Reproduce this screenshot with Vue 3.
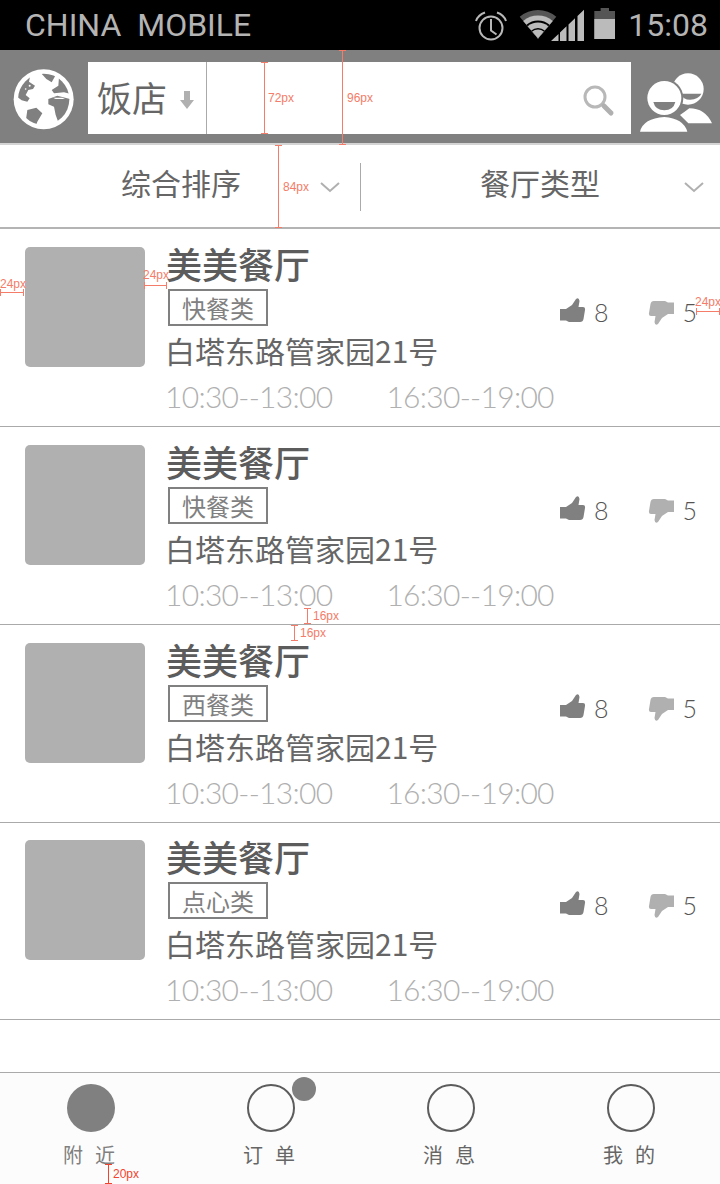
<script setup>
const shops = [
  { tag: '快餐类' },
  { tag: '快餐类' },
  { tag: '西餐类' },
  { tag: '点心类' },
]

const tabs = [
  { name: '附', name2: '近', active: true },
  { name: '订', name2: '单', dot: true },
  { name: '消', name2: '息' },
  { name: '我', name2: '的' },
]

// redline measurements drawn over the mockup
const vMarks = [
  { x: 264, y: 62, h: 72, label: '72px', top: 91, left: 268 },
  { x: 342, y: 50, h: 95, label: '96px', top: 91, left: 347 },
  { x: 278, y: 145, h: 83, label: '84px', top: 180, left: 283 },
  { x: 307, y: 608, h: 16, label: '16px', top: 609, left: 313 },
  { x: 294, y: 625, h: 16, label: '16px', top: 626, left: 300 },
  { x: 108, y: 1164, h: 20, label: '20px', top: 1167, left: 113, strong: true },
]
const hMarks = [
  { x: 0, y: 292, w: 24, label: '24px', top: 277, left: 0 },
  { x: 144, y: 285, w: 23, label: '24px', top: 268, left: 143 },
  { x: 696, y: 311, w: 24, label: '24px', top: 295, left: 695 },
]
</script>

<template>
  <div class="phone">
    <div class="status">
      <span class="carrier">CHINA&nbsp; MOBILE</span>
      <div class="status-right">
        <svg class="alarm" width="32" height="32" viewBox="0 0 32 32" fill="none" stroke="#b8b8b8">
          <circle cx="16" cy="19" r="11.500" stroke-width="2" />
          <path d="M16 10v11.500l5.500 4" stroke-width="2" />
          <path d="M1 12Q3 6 10 3.500M31 12Q29 6 22 3.500" stroke-width="2" />
        </svg>
        <svg class="net" width="66" height="34" viewBox="0 0 66 34">
          <path d="M19 30.500L0.700 8.700A28.500 28.500 0 0 1 37.300 8.700Z" fill="#555" />
          <path d="M19 30.500L4.200 12.900A23 23 0 0 1 33.800 12.900Z" fill="#bbb" />
          <path d="M19 30.500L7.400 16.700A18 18 0 0 1 30.600 16.700Z" fill="#000" />
          <path d="M19 30.500L8.700 18.200A16 16 0 0 1 29.300 18.200Z" fill="#bbb" />
          <path d="M19 30.500L12.200 22.500A10.500 10.500 0 0 1 25.800 22.500Z" fill="#000" />
          <path d="M19 30.500L13.200 23.600A9 9 0 0 1 24.800 23.600Z" fill="#bbb" />
          <path d="M32 33L39.500 26V33ZM41 33V24.500L47.500 18.300V33ZM49.500 33V16.400L56 10.200V33ZM58.500 33V7.900L65 1.700V33Z" fill="#bbb" />
        </svg>
        <div class="battery"><div class="battery-fill"></div></div>
        <span class="clock">15:08</span>
      </div>
    </div>

    <div class="header">
      <svg class="globe" width="68" height="68" viewBox="0 0 204 204">
        <defs>
          <clipPath id="globe-inner"><circle cx="104" cy="103" r="77" /></clipPath>
        </defs>
        <circle cx="104" cy="103" r="90" fill="#fff" />
        <g clip-path="url(#globe-inner)" fill="#808080">
          <path d="M20 92L30 40L64 30L60 50L78 62L72 72L58 75L50 90L62 100L55 110L38 106Z" />
          <path d="M92 20H146L128 52L112 42Z" />
          <path d="M150 36L190 60V88L165 82L135 85L128 75L148 62Z" />
          <path d="M118 102L145 92L190 104V160L150 177L140 150L135 125L118 118Z" />
          <path d="M55 135L82 128L100 145L85 170L78 190L50 170Z" />
        </g>
        <circle cx="62" cy="62" r="3" fill="#fff" />
        <circle cx="50" cy="72" r="2.500" fill="#fff" />
        <path d="M132 98H160L168 102L140 102Z" fill="#fff" />
      </svg>
      <div class="search">
        <div class="city">
          <span>饭店</span>
          <svg width="14" height="18" viewBox="0 0 14 18"><path d="M4 0H10V9H14L7 18L0 9H4Z" fill="#b0b0b0" /></svg>
        </div>
        <svg class="lens" width="32" height="32" viewBox="0 0 32 32" fill="none">
          <circle cx="12" cy="12" r="10" stroke="#b8b8b8" stroke-width="3" />
          <path d="M21 21L28 28" stroke="#b0b0b0" stroke-width="5" stroke-linecap="round" />
        </svg>
      </div>
      <svg class="people" width="90" height="90" viewBox="0 0 270 270">
        <circle cx="174" cy="102" r="47" fill="#fff" />
        <path d="M150 116H214Q206 133 180 134Q160 134 150 116Z" fill="#808080" />
        <path d="M150 180Q165 170 178 160Q225 160 246 205H175Z" fill="#fff" />
        <circle cx="103" cy="129" r="57" fill="#808080" />
        <circle cx="103" cy="129" r="51" fill="#fff" />
        <path d="M70 141H136Q130 166 103 166Q76 166 70 141Z" fill="#808080" />
        <path d="M30 230Q40 190 103 186Q160 190 172 230Z" fill="#fff" />
      </svg>
    </div>

    <div class="filters">
      <div class="filter">
        <span class="filter-text">综合排序</span>
        <svg class="chevron" width="20" height="11" viewBox="0 0 20 11"><path d="M1 1L10 9L19 1" fill="none" stroke="#b0b0b0" stroke-width="2" /></svg>
      </div>
      <div class="filter filter-second">
        <span class="filter-text">餐厅类型</span>
        <svg class="chevron" width="20" height="11" viewBox="0 0 20 11"><path d="M1 1L10 9L19 1" fill="none" stroke="#b0b0b0" stroke-width="2" /></svg>
      </div>
    </div>

    <div class="list">
      <div v-for="(shop, i) in shops" :key="i" class="shop">
        <div class="thumb"></div>
        <div class="info">
          <div class="title">美美餐厅</div>
          <div class="tag">{{ shop.tag }}</div>
          <div class="address">白塔东路管家园21号</div>
          <div class="hours"><span>10:30--13:00</span><span>16:30--19:00</span></div>
        </div>
        <div class="votes">
          <div class="vote">
            <svg width="26" height="24" viewBox="0 0 26 24" fill="#808080"><path d="M0 11H6L12 7L16 1Q19 -1 19.500 3L18.500 9H23Q25.500 9 25 12L23.500 21Q23 24 20 24H9L6 22.500H0Z" /></svg>
            <span>8</span>
          </div>
          <div class="vote">
            <svg class="down" width="26" height="24" viewBox="0 0 26 24" fill="#b0b0b0"><path d="M0 11H6L12 7L16 1Q19 -1 19.500 3L18.500 9H23Q25.500 9 25 12L23.500 21Q23 24 20 24H9L6 22.500H0Z" /></svg>
            <span>5</span>
          </div>
        </div>
      </div>
    </div>

    <div class="tabbar">
      <div v-for="tab in tabs" :key="tab.name" class="tab">
        <div :class="['circle', { active: tab.active }]">
          <div v-if="tab.dot" class="dot"></div>
        </div>
        <div :class="['tab-name', { active: tab.active }]"><span>{{ tab.name }}</span><span>{{ tab.name2 }}</span></div>
      </div>
    </div>

    <template v-for="m in vMarks" :key="m.x">
      <div :class="['vmark', { strong: m.strong }]" :style="{ left: m.x + 'px', top: m.y + 'px', height: m.h + 'px' }"></div>
      <span :class="['mark-label', { strong: m.strong }]" :style="{ left: m.left + 'px', top: m.top + 'px' }">{{ m.label }}</span>
    </template>
    <template v-for="m in hMarks" :key="m.x">
      <div class="hmark" :style="{ left: m.x + 'px', top: m.y + 'px', width: m.w + 'px' }"></div>
      <span class="mark-label" :style="{ left: m.left + 'px', top: m.top + 'px' }">{{ m.label }}</span>
    </template>
  </div>
</template>

<style scoped>
.phone {
  position: relative;
  width: 720px;
  height: 1184px;
  overflow: hidden;
  background: #fff;
  display: flex;
  flex-direction: column;
  font-family: "Noto Sans CJK SC", "Liberation Sans", sans-serif;
  color: #666;
}

.status {
  height: 50px;
  background: #000;
  display: flex;
  align-items: center;
  justify-content: space-between;
  padding: 0 12px 0 25px;
  font-family: Roboto, sans-serif;
  color: #b4b4b4;
}

.carrier {
  font-size: 32px;
  line-height: 50px;
}

.status-right {
  display: flex;
  align-items: center;
}

.alarm {
  margin-right: 12px;
}

.net {
  margin-right: 9px;
}

.battery {
  width: 21px;
  height: 31px;
  margin: -3px 13px 0 0;
  background: #555;
  clip-path: polygon(30% 0, 70% 0, 70% 10%, 100% 10%, 100% 100%, 0 100%, 0 10%, 30% 10%);
  display: flex;
  align-items: flex-end;
}

.battery-fill {
  width: 100%;
  height: 20px;
  background: #bbb;
}

.clock {
  font-size: 32px;
  line-height: 50px;
}

.header {
  height: 93px;
  background: #808080;
  border-bottom: 2px solid #d4d4d4;
  display: flex;
  align-items: flex-start;
}

.globe {
  margin: 15px 11px 0 9px;
}

.search {
  width: 543px;
  height: 72px;
  margin-top: 12px;
  background: #fff;
  display: flex;
  align-items: center;
  justify-content: space-between;
  padding-right: 16px;
  box-sizing: border-box;
}

.city {
  width: 119px;
  height: 72px;
  border-right: 1px solid #aaa;
  display: flex;
  align-items: center;
  box-sizing: border-box;
  padding-left: 9px;
  font-size: 35px;
  color: #666;
}

.city span {
  margin-bottom: 3px;
}

.city svg {
  margin-left: 13px;
  margin-top: 4px;
}

.lens {
  margin-top: 6px;
}

.people {
  margin-top: 5px;
  margin-left: -1px;
  flex: none;
}

.filters {
  height: 84px;
  box-sizing: border-box;
  border-bottom: 2px solid #b4b4b4;
  padding-top: 2px;
  display: flex;
  align-items: center;
  font-size: 30px;
  color: #666;
}

.filter {
  width: 361px;
  height: 48px;
  display: flex;
  align-items: center;
  border-right: 1px solid #aaa;
  box-sizing: border-box;
  padding-left: 121px;
}

.filter-text {
  margin-bottom: 10px;
}

.filter-second {
  width: 359px;
  border-right: none;
  padding-left: 119px;
}

.filter .chevron {
  margin-left: 79px;
  margin-top: 1px;
}

.filter-second .chevron {
  margin-left: 84px;
}

.list {
  flex: 1;
}

.shop {
  height: 198px;
  box-sizing: border-box;
  border-bottom: 1px solid #aaa;
  padding: 18px 23px 0 25px;
  display: flex;
  align-items: flex-start;
}

.shop:last-child {
  height: 197px;
  padding-top: 17px;
}

.thumb {
  width: 120px;
  height: 120px;
  border-radius: 5px;
  background: #b0b0b0;
  flex: none;
}

.info {
  margin-left: 21px;
  width: 396px;
}

.title {
  margin-top: -8px;
  font-size: 36px;
  line-height: 48px;
  font-weight: 500;
  color: #5c5c5c;
}

.tag {
  margin: 2px 0 0 2px;
  width: 100px;
  height: 37px;
  box-sizing: border-box;
  border: 2px solid #808080;
  font-size: 24px;
  line-height: 33px;
  text-align: center;
  color: #808080;
}

.address {
  margin: 2px 0 0 -1px;
  font-size: 30px;
  line-height: 44px;
  color: #666;
  white-space: nowrap;
}

.hours {
  margin: 2px 0 0 -1px;
  font-family: Lato, sans-serif;
  font-weight: 300;
  font-size: 30px;
  letter-spacing: -0.7px;
  line-height: 44px;
  color: #b0b0b0;
  display: flex;
  gap: 54px;
  white-space: nowrap;
}

.votes {
  margin: 51px 0 0 0;
  display: flex;
  gap: 40px;
}

.vote {
  display: flex;
  align-items: flex-start;
  gap: 8px;
  font-size: 25px;
  line-height: 30px;
  color: #555;
  font-family: Lato, sans-serif;
  font-weight: 300;
}

.vote span {
  margin-top: -1px;
}

.down {
  margin-top: 3px;
  transform: rotate(180deg);
}

.tabbar {
  height: 112px;
  box-sizing: border-box;
  border-top: 1px solid #aaa;
  background: #fcfcfc;
  display: flex;
  padding-left: 1px;
}

.tab {
  flex: none;
  width: 180px;
  display: flex;
  flex-direction: column;
  align-items: center;
  padding-top: 11px;
}

.circle {
  position: relative;
  width: 48px;
  height: 48px;
  box-sizing: border-box;
  border-radius: 50%;
  border: 2px solid #5c5c5c;
}

.circle.active {
  background: #808080;
  border: none;
}

.dot {
  position: absolute;
  top: -9px;
  right: -23px;
  width: 24px;
  height: 24px;
  border-radius: 50%;
  background: #808080;
}

.tab-name {
  margin: 8px 4px 0 0;
  display: flex;
  gap: 12px;
  font-size: 20px;
  line-height: 30px;
  color: #666;
}

.tab-name.active {
  color: #808080;
}

.vmark {
  position: absolute;
  width: 1px;
  background: #f47c68;
}

.vmark::before,
.vmark::after {
  content: "";
  position: absolute;
  left: -3px;
  width: 7px;
  height: 1px;
  background: inherit;
}

.vmark::before {
  top: 0;
}

.vmark::after {
  bottom: 0;
}

.vmark.strong {
  background: #f4432c;
}

.hmark {
  position: absolute;
  height: 1px;
  background: #f47c68;
}

.hmark::before,
.hmark::after {
  content: "";
  position: absolute;
  top: -3px;
  width: 1px;
  height: 7px;
  background: inherit;
}

.hmark::before {
  left: 0;
}

.hmark::after {
  right: 0;
}

.mark-label {
  position: absolute;
  font-family: "Liberation Sans", sans-serif;
  font-size: 12px;
  line-height: 14px;
  color: #f47c68;
}

.mark-label.strong {
  color: #f4432c;
}
</style>
